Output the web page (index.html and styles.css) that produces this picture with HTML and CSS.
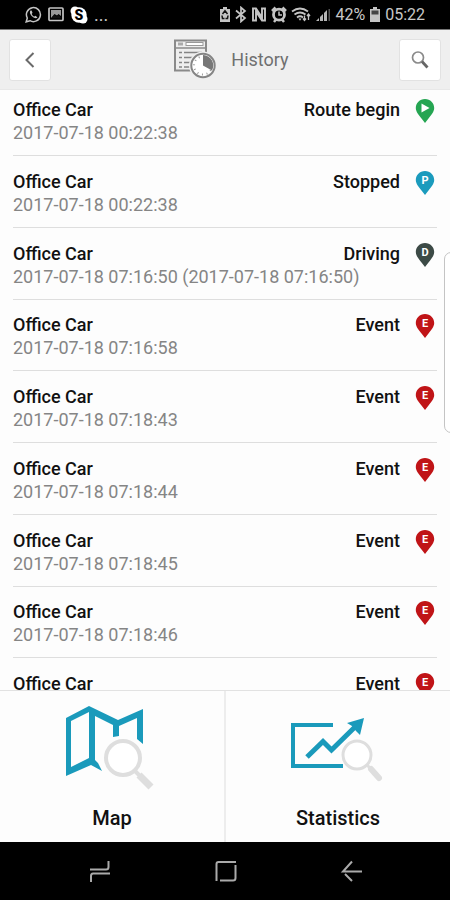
FILE: index.html
```html
<!DOCTYPE html>
<html lang="en">
<head>
<meta charset="utf-8">
<meta name="viewport" content="width=device-width, initial-scale=1">
<title>History</title>
<link rel="stylesheet" href="styles.css">
</head>
<body>
<svg class="defs" aria-hidden="true">
  <symbol id="pin" viewBox="0 0 20 26"><path d="M10 1C4.700 1 .8 5 .8 10C.8 14 4 17 6.500 20.500L10 25L13.500 20.500C16 17 19.200 14 19.200 10C19.200 5 15.300 1 10 1Z"/></symbol>
</svg>
<div class="status">
  <div class="status-group">
    <svg width="17" height="17" viewBox="0 0 17 17"><path d="M1.200 15.800L2.300 12A7 7 0 1 1 5 14.700Z" fill="none" stroke="#c4c4c4" stroke-width="1.500"/><path d="M5.500 4.500C4 6.500 5.800 9 7.300 10.500C9 12 11 13 12.500 11.500L10.500 9.800L9.300 10.600C8 10 7.200 9 6.700 7.900L7.500 6.800L6.600 4.600Z" fill="#c4c4c4"/></svg>
    <svg width="16" height="17" viewBox="0 0 16 17"><rect x="1" y="2" width="14" height="12.500" rx="1" fill="none" stroke="#c4c4c4" stroke-width="1.700"/><path d="M3 4H13V10L10.500 8L9 9.500L6.500 8L3 12Z" fill="#999"/><path d="M3.500 12.300L6.500 9L8.500 10.500L11 9L13 12.300Z" fill="#111"/></svg>
    <svg width="18" height="18" viewBox="0 0 18 18"><circle cx="9" cy="9" r="7.700" fill="#fff"/><circle cx="5" cy="5" r="4.500" fill="#fff"/><circle cx="13" cy="13" r="4.500" fill="#fff"/><text x="9" y="14" text-anchor="middle" font-size="14" font-weight="900">S</text></svg>
    <span class="more">...</span>
  </div>
  <div class="status-group status-right">
    <svg width="12" height="17" viewBox="0 0 12 17"><path d="M4 1H8V3H11V16H1V3H4Z" fill="#c4c4c4"/><path d="M3.500 8L6 4.800L8.500 8M3 9.500L3.500 12.500H5.500M9 9.500L8.500 12.500H6.500" fill="none" stroke="#111" stroke-width="1.500"/></svg>
    <svg class="bt" width="12" height="17" viewBox="0 0 12 17"><path d="M1 4.500L10 12L6 15.500V1.500L10 5L1 12.500" fill="none" stroke="#c4c4c4" stroke-width="1.700"/></svg>
    <svg width="16" height="17" viewBox="0 0 16 17"><path d="M5 14.500H2V2.500H5L11 11.500V2.500H14V14.500H11L5 5.500Z" fill="none" stroke="#c4c4c4" stroke-width="1.900"/></svg>
    <svg width="16" height="17" viewBox="0 0 16 17"><circle cx="8" cy="8.700" r="5.500" fill="none" stroke="#c4c4c4" stroke-width="2.800"/><path d="M1 5L4.500 1.500M15 5L11.500 1.500M3 16L5 13.500M13 16L11 13.500" stroke="#c4c4c4" stroke-width="2.500"/><path d="M8 5.500V9H11" fill="none" stroke="#c4c4c4" stroke-width="1.500"/></svg>
    <svg width="21" height="17" viewBox="0 0 21 17"><path d="M1 5.500Q9 -.5 17 5.500M3.500 8.500Q9 4.500 14.500 8.500M6 11.500Q9 9 12 11.500" fill="none" stroke="#c4c4c4" stroke-width="1.800"/><path d="M7.500 12.500H10.500L9 14.800Z" fill="#c4c4c4"/><path d="M13.500 9.500V14M12 12.500L13.500 14.500L15 12.500M17.500 14V8.500M16 10L17.500 8L19 10" fill="none" stroke="#c4c4c4" stroke-width="1.300"/></svg>
    <svg width="15" height="17" viewBox="0 0 15 17"><path d="M0 15L11 4V15Z" fill="#b5b5b5"/><path d="M3.500 4V15M7.500 4V15" stroke="#000" stroke-width="1"/><path d="M12.500 15V3H14V15Z" fill="#555"/></svg>
    <span class="percent">42%</span>
    <svg width="12" height="17" viewBox="0 0 12 17"><path d="M4 1H8V3H11V16H1V3H4Z" fill="#c4c4c4"/><path d="M2.500 4.500H9.500V8.500H2.500Z" fill="#444"/></svg>
    <span>05:22</span>
  </div>
</div>

<header class="header">
  <button class="icon-button" type="button" aria-label="Back"><svg width="20" height="20" viewBox="0 0 20 20"><path d="M13.500 3L6.500 10L13.500 17" fill="none" stroke="#6a6a6a" stroke-width="2"/></svg></button>
  <div class="title">
    <svg width="44" height="42" viewBox="0 0 44 42"><rect x="2" y="1.500" width="31" height="30" fill="#eee" stroke="#8a8a8a" stroke-width="2"/><path d="M2 9H33" stroke="#8a8a8a" stroke-width="1.500"/><rect x="5" y="3.500" width="5" height="3" fill="#aaa"/><rect x="13" y="3.500" width="17" height="3" fill="#fff" stroke="#999"/><path d="M6 13.500H9M6 18.500H9M6 23.500H9M6 28H9M11 13.500H29M11 18.500H23M11 23.500H17M11 28H17" stroke="#858585" stroke-width="1.700"/><circle cx="30" cy="26.500" r="14" fill="#efefef"/><circle cx="30" cy="26.500" r="11.700" fill="#fff" stroke="#858585" stroke-width="2"/><circle cx="30" cy="26.500" r="9" fill="none" stroke="#999" stroke-width="2" stroke-dasharray="1 3.712"/><path d="M30 26.500V16A10.500 10.500 0 0 1 39 31.500Z" fill="#777"/></svg>
    <h1>History</h1>
  </div>
  <button class="icon-button" type="button" aria-label="Search"><svg width="20" height="20" viewBox="0 0 20 20"><circle cx="8" cy="7.500" r="5.500" fill="none" stroke="#8a8a8a" stroke-width="1.700"/><path d="M12 11.500L17.500 17.500" stroke="#666" stroke-width="2.800"/></svg></button>
</header>

<main class="list-area">
  <ul class="list">
    <li class="row"><span class="name">Office Car</span><span class="kind">Route begin</span><svg class="pin route" viewBox="0 0 20 26"><use href="#pin"/><path d="M6.500 5.500L14.500 10L6.500 14.500Z" fill="#fff"/></svg><time class="time">2017-07-18 00:22:38</time></li>
    <li class="row"><span class="name">Office Car</span><span class="kind">Stopped</span><svg class="pin stopped" viewBox="0 0 20 26"><use href="#pin"/><text x="10" y="14">P</text></svg><time class="time">2017-07-18 00:22:38</time></li>
    <li class="row"><span class="name">Office Car</span><span class="kind">Driving</span><svg class="pin driving" viewBox="0 0 20 26"><use href="#pin"/><text x="10" y="14">D</text></svg><time class="time">2017-07-18 07:16:50 (2017-07-18 07:16:50)</time></li>
    <li class="row"><span class="name">Office Car</span><span class="kind">Event</span><svg class="pin event" viewBox="0 0 20 26"><use href="#pin"/><text x="10" y="14">E</text></svg><time class="time">2017-07-18 07:16:58</time></li>
    <li class="row"><span class="name">Office Car</span><span class="kind">Event</span><svg class="pin event" viewBox="0 0 20 26"><use href="#pin"/><text x="10" y="14">E</text></svg><time class="time">2017-07-18 07:18:43</time></li>
    <li class="row"><span class="name">Office Car</span><span class="kind">Event</span><svg class="pin event" viewBox="0 0 20 26"><use href="#pin"/><text x="10" y="14">E</text></svg><time class="time">2017-07-18 07:18:44</time></li>
    <li class="row"><span class="name">Office Car</span><span class="kind">Event</span><svg class="pin event" viewBox="0 0 20 26"><use href="#pin"/><text x="10" y="14">E</text></svg><time class="time">2017-07-18 07:18:45</time></li>
    <li class="row"><span class="name">Office Car</span><span class="kind">Event</span><svg class="pin event" viewBox="0 0 20 26"><use href="#pin"/><text x="10" y="14">E</text></svg><time class="time">2017-07-18 07:18:46</time></li>
    <li class="row"><span class="name">Office Car</span><span class="kind">Event</span><svg class="pin event" viewBox="0 0 20 26"><use href="#pin"/><text x="10" y="14">E</text></svg></li>
  </ul>
  <div class="edge-handle"></div>
</main>

<div class="tiles">
  <button class="tile" type="button">
    <svg width="96" height="90" viewBox="0 0 96 90"><path d="M2 15L25 3L54 17L79 6V41L73 36V15L55 23V33L49 34V22L31 13V57L34 60L38 68L27 62L2 73ZM7 18V64L25 55V9Z" fill="#1a9abb" fill-rule="evenodd"/><circle cx="59" cy="55" r="17" fill="#fff" stroke="#dedede" stroke-width="4"/><path d="M70 67L76 73" stroke="#dedede" stroke-width="4"/><path d="M75 72L87 84" stroke="#dedede" stroke-width="7"/></svg>
    <span>Map</span>
  </button>
  <button class="tile" type="button">
    <svg width="96" height="90" viewBox="0 0 96 90"><path d="M43 22H3V63H53" fill="none" stroke="#1a9abb" stroke-width="4"/><path d="M17 54L33 38.500L41.500 47L67 22" fill="none" stroke="#1a9abb" stroke-width="5"/><path d="M74 15L57 20L62 23L66 28L70 32Z" fill="#1a9abb"/><circle cx="67" cy="52" r="14" fill="#fff" stroke="#dedede" stroke-width="3"/><path d="M77 62L82 67" stroke="#dedede" stroke-width="3"/><path d="M81 66L89 75" stroke="#dedede" stroke-width="6" stroke-linecap="round"/></svg>
    <span>Statistics</span>
  </button>
</div>

<nav class="nav">
  <button type="button" aria-label="Recent apps"><svg width="24" height="24" viewBox="0 0 24 24"><path d="M2 10.500H18Q20.500 10.500 20.500 8V2M22 14.500H5Q3 14.500 3 17V23"/></svg></button>
  <button type="button" aria-label="Home"><svg width="24" height="24" viewBox="0 0 24 24"><path d="M2.500 22V5Q2.500 3 4.500 3H22M21.500 6V19Q21.500 21.500 19 21.500H6"/></svg></button>
  <button type="button" aria-label="Back"><svg width="24" height="24" viewBox="0 0 24 24"><path d="M12 2.500L3 12.500H22M5 15L12 22"/></svg></button>
</nav>
</body>
</html>
```
FILE: styles.css
```css
* {
  box-sizing: border-box;
}

body {
  margin: 0;
  height: 100vh;
  display: flex;
  flex-direction: column;
  background: #fdfdfd;
  color: #111;
  font-family: Roboto, "Liberation Sans", sans-serif;
}

svg {
  display: block;
  flex: none;
}

button {
  margin: 0;
  padding: 0;
  border: 0;
  background: none;
  color: inherit;
  font: inherit;
}

.defs {
  position: absolute;
  width: 0;
  height: 0;
}

.status {
  flex: none;
  height: 30px;
  padding: 0 25px;
  display: flex;
  justify-content: space-between;
  align-items: center;
  background: #000;
  border-bottom: 1px solid #777;
  color: #c8c8c8;
  font-size: 16px;
  line-height: 20px;
}

.status-group {
  display: flex;
  align-items: center;
  gap: 6px;
}

.status-right {
  gap: 4px;
}

.more {
  font-size: 18px;
}

.header {
  flex: none;
  height: 60px;
  padding: 0 9px;
  display: flex;
  align-items: center;
  justify-content: space-between;
  background: #efefef;
  border-bottom: 1px solid #e8e8e8;
}

.icon-button {
  width: 42px;
  height: 42px;
  display: grid;
  place-items: center;
  background: #fff;
  border: 1px solid #e2e2e2;
  border-radius: 3px;
}

.title {
  display: flex;
  align-items: center;
  gap: 14px;
  padding-left: 12px;
}

.title h1 {
  margin: 0;
  color: #707070;
  font-size: 18px;
  font-weight: 400;
  line-height: 24px;
}

.list-area {
  position: relative;
  flex: 1;
  min-height: 0;
  overflow: hidden;
}

.list {
  margin: 0;
  padding: 0 13px;
  list-style: none;
}

.row {
  height: 72px;
  padding-top: 8px;
  display: grid;
  grid-template-columns: 1fr auto 20px;
  grid-template-rows: 23px 23px;
  column-gap: 15px;
  padding-right: 2px;
  line-height: 23px;
  font-size: 18px;
  border-bottom: 1px solid #dedede;
}

.row:first-child {
  height: 66px;
}

.row:nth-child(4n) {
  height: 71px;
}

.row + .row {
  padding-top: 14px;
}

.row:nth-child(4n) {
  padding-top: 13px;
}

.name,
.kind {
  font-weight: 500;
}

.time {
  grid-column: 1 / -1;
  color: #858585;
}

.pin {
  width: 20px;
  height: 26px;
}

.pin text {
  fill: #fff;
  font-size: 11px;
  font-weight: 700;
  text-anchor: middle;
}

.route {
  fill: #25a552;
}

.stopped {
  fill: #1b9bbd;
}

.driving {
  fill: #3c4a46;
}

.event {
  fill: #c01417;
}

.edge-handle {
  position: absolute;
  top: 162px;
  right: -8px;
  width: 14px;
  height: 181px;
  background: #fff;
  border: 1px solid #c4c4c4;
  border-radius: 7px;
}

.tiles {
  flex: none;
  display: grid;
  grid-template-columns: 1fr 1fr;
  gap: 2px;
  background: #ededed;
  border-top: 1px solid #e2e2e2;
}

.tile {
  height: 151px;
  padding-top: 12px;
  display: flex;
  flex-direction: column;
  align-items: center;
  gap: 13px;
  background: #fdfdfd;
  font-size: 20px;
  font-weight: 500;
  line-height: 24px;
}

.nav {
  flex: none;
  height: 58px;
  padding: 0 35px 0 37px;
  display: grid;
  grid-template-columns: repeat(3, 1fr);
  align-items: center;
  justify-items: center;
  background: #000;
}

.nav path {
  fill: none;
  stroke: #aaa;
  stroke-width: 2;
}
```
